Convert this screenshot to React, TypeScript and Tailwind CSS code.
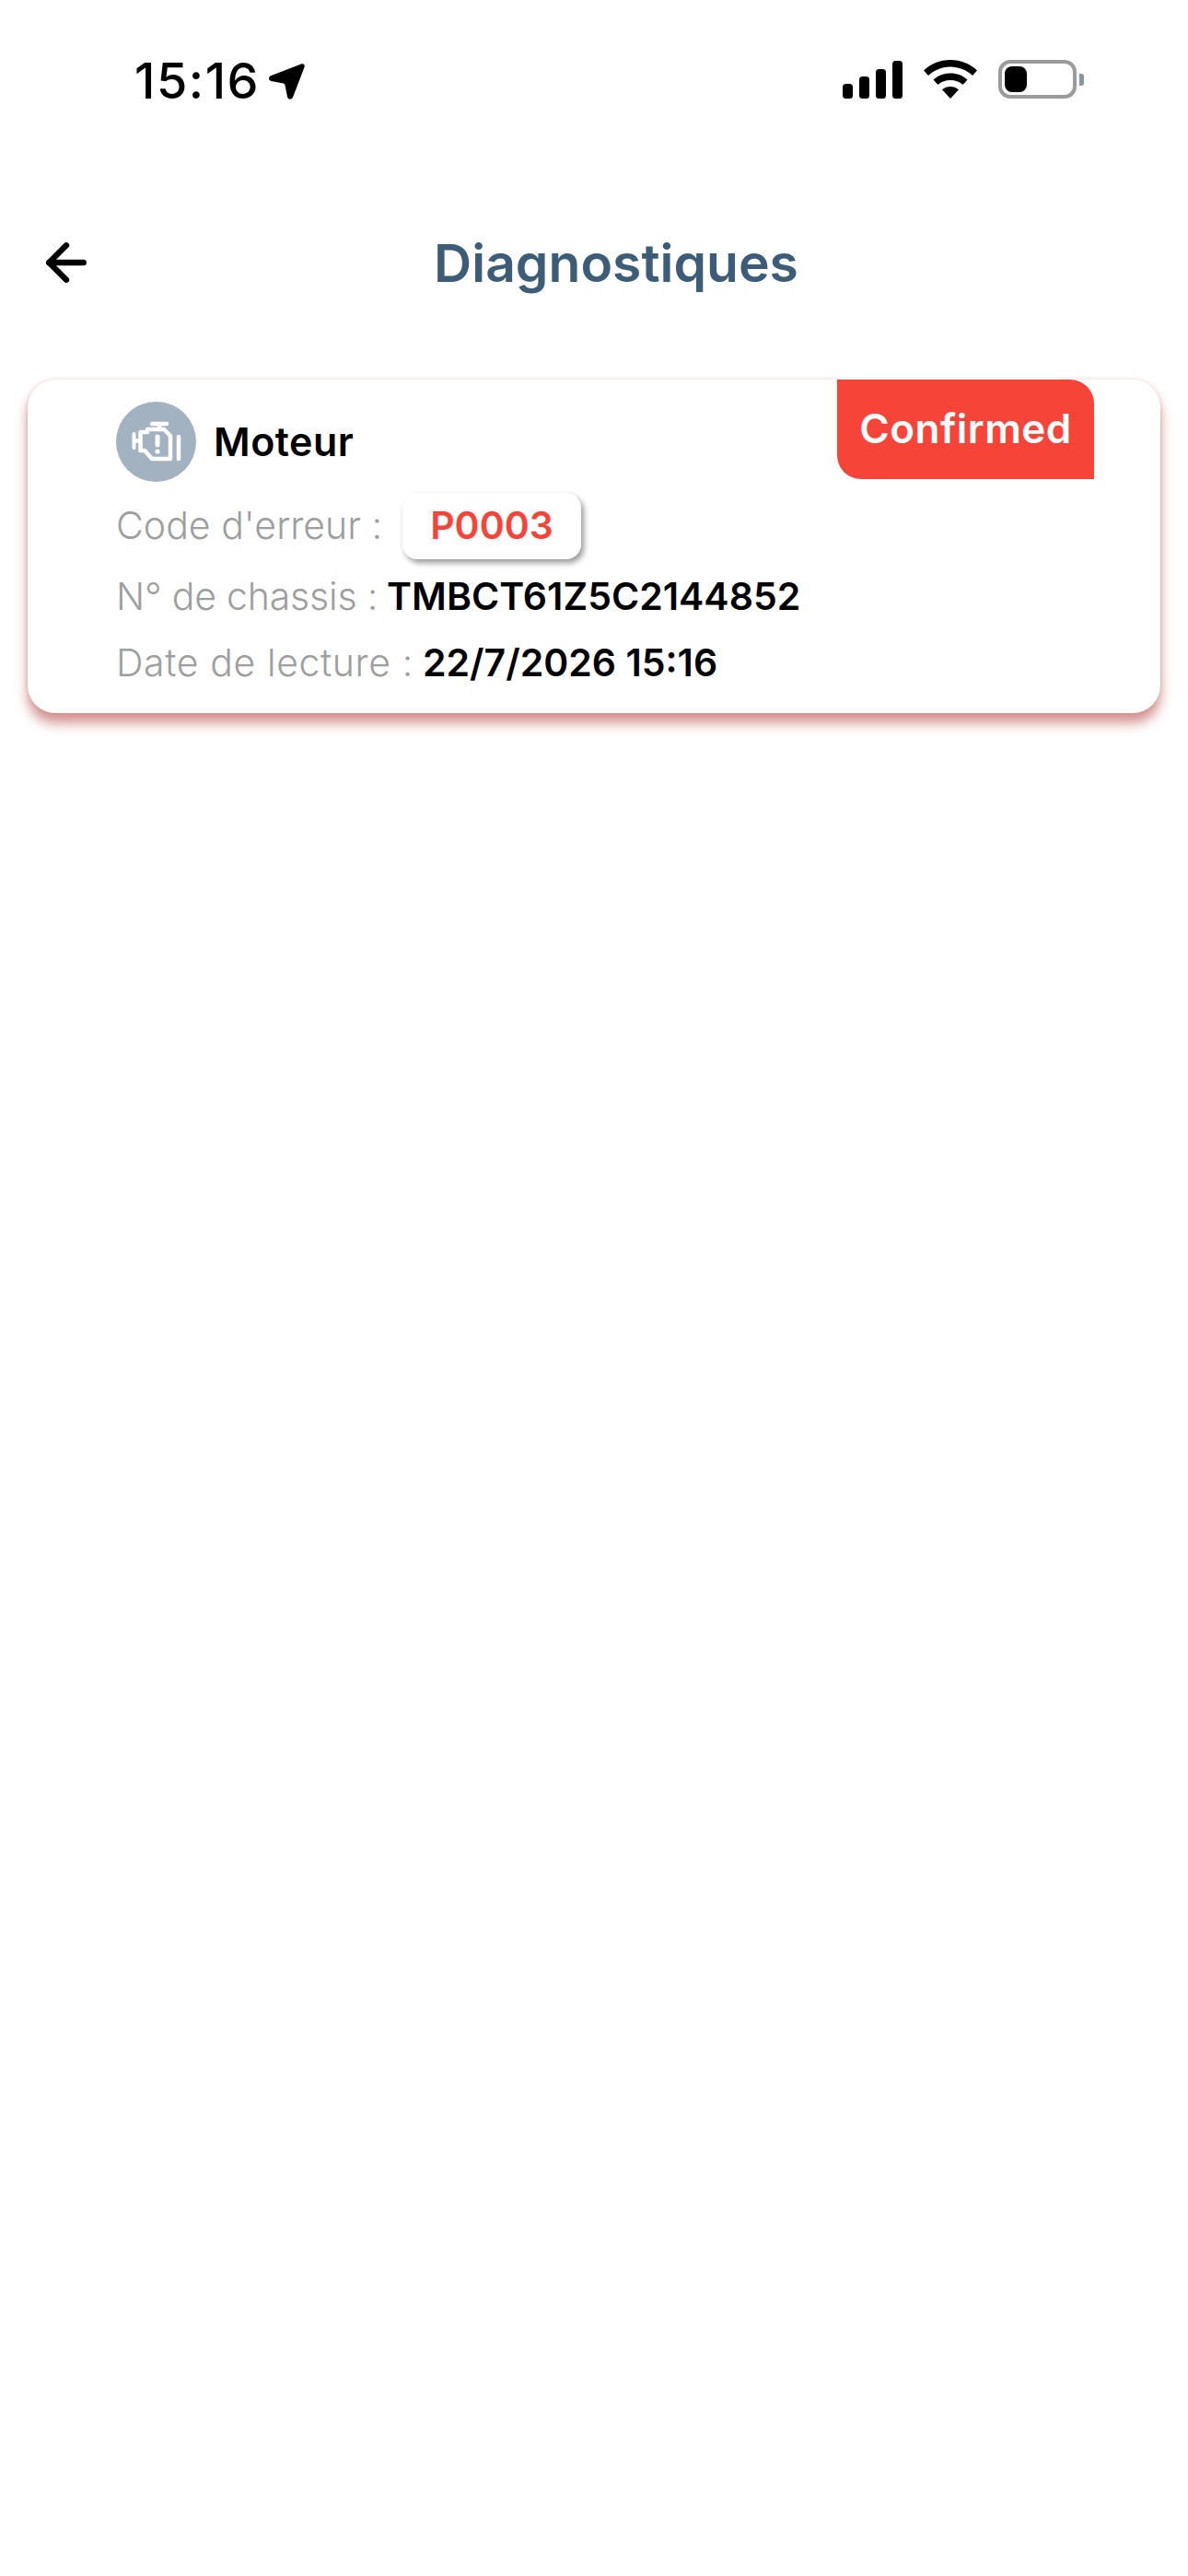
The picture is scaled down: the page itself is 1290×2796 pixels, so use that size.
import { ArrowLeft } from "lucide-react";

function SignalIcon() {
  return (
    <svg width="65" height="41" viewBox="0 0 65 41" fill="#000">
      <rect x="0" y="25" width="11" height="16" rx="3.5" />
      <rect x="18" y="17" width="11" height="24" rx="3.5" />
      <rect x="36" y="9" width="11" height="32" rx="3.5" />
      <rect x="54" y="0" width="11" height="41" rx="3.5" />
    </svg>
  );
}

function WifiIcon() {
  return (
    <svg width="58" height="42" viewBox="0 0 58 42" fill="#000">
      <path d="M29 0C18 0 8 4 0 11.500L5 17C11.500 11 20 7.500 29 7.500S46.500 11 53 17L58 11.500C50 4 40 0 29 0Z" />
      <path d="M29 14.500C22 14.500 15.500 17 10.500 21.500L15.500 27C19 23.800 24 22 29 22S39 23.800 42.500 27L47.500 21.500C42.500 17 36 14.500 29 14.500Z" />
      <path d="M29 29C25.500 29 22.500 30.200 20 32.300L29 42L38 32.300C35.500 30.200 32.500 29 29 29Z" />
    </svg>
  );
}

function BatteryIcon() {
  return (
    <div className="flex items-center gap-[3px]">
      <div className="flex h-[42px] w-[85px] items-center rounded-[13px] border-[4px] border-[#9b9b9b] pl-[3px]">
        <div className="h-[28px] w-[24px] rounded-[8px] bg-black" />
      </div>
      <div className="h-[13px] w-[5px] rounded-r-[3px] bg-[#8a949e]" />
    </div>
  );
}

function EngineIcon() {
  return (
    <svg width="54" height="46" viewBox="0 0 54 46" fill="none" stroke="#fff" strokeWidth="4.500" strokeLinecap="round" strokeLinejoin="round">
      <path d="M2.500 14V29" strokeWidth="4" />
      <path d="M3 21.500H9" />
      <path d="M22 3H38" />
      <path d="M30 3V9" />
      <path d="M9.500 12H17V9H35L42 16V41H22L14 32H9.500Z" />
      <path d="M51 17V41" strokeWidth="4.500" />
      <path d="M28 17V26" strokeWidth="5" />
      <circle cx="28" cy="33" r="2.600" fill="#fff" stroke="none" />
    </svg>
  );
}

export default function App() {
  return (
    <div className="min-h-[2796px] w-[1290px] bg-white font-['Inter',sans-serif]">
      {/* status bar */}
      <div className="flex h-[176px] items-start justify-between pl-[146px] pr-[113px] pt-[60px]">
        <div className="flex items-center gap-[9px] text-[54px] font-medium leading-[56px] tracking-[1.5px] text-black">
          <span>15:16</span>
          <svg width="41" height="41" viewBox="0 0 41 41" fill="#000">
            <path d="M36 1.500C38.500.5 40.500 2.500 39.500 5L27 37.500C25.800 40.500 21.500 40.200 21 37L18.500 24.500C18.300 23.500 17.500 22.700 16.500 22.500L3.500 20C.5 19.400 .2 15.500 3 14.300Z" />
          </svg>
        </div>
        <div className="flex items-center gap-[23px] pt-[5px]">
          <SignalIcon />
          <WifiIcon />
          <BatteryIcon />
        </div>
      </div>

      {/* header */}
      <div className="relative flex h-[236px] items-start justify-center px-[49px]">
        <ArrowLeft className="absolute left-[40px] top-[77px] h-[64px] w-[64px] text-black" strokeWidth={2.400} />
        <h1 className="ml-[48px] pt-[78px] text-[57px] font-semibold leading-[64px] text-[#3d5c78]">Diagnostiques</h1>
      </div>

      {/* card */}
      <div className="px-[30px]">
        <div className="relative h-[362px] rounded-[30px] bg-white pl-[96px] pt-[24px] shadow-[0_11px_13px_rgba(175,60,55,0.55),0_0_4px_rgba(175,60,55,0.2)]">
          <div className="absolute right-[72px] top-0 flex h-[108px] w-[279px] items-center justify-center rounded-bl-[26px] rounded-tr-[26px] bg-[#f74438] pb-[2px] text-[44px] font-semibold tracking-[0.5px] text-white">
            Confirmed
          </div>
          <div className="flex items-center gap-[19px]">
            <div className="flex h-[87px] w-[87px] items-center justify-center rounded-full bg-[#a2b2c0]">
              <EngineIcon />
            </div>
            <span className="text-[43px] font-semibold tracking-[0.5px] text-black">Moteur</span>
          </div>
          <div className="mt-[12px] flex items-center text-[41px] font-light text-[#9e9e9e]">
            <span className="w-[311px]">Code d'erreur :</span>
            <span className="flex h-[72px] w-[194px] items-center justify-center rounded-[16px] bg-white text-[41px] font-semibold text-[#f74438] shadow-[3px_4px_6px_rgba(0,0,0,0.4)]">
              P0003
            </span>
          </div>
          <div className="mt-[15px] flex items-center gap-[10px] text-[41px] font-light leading-[50px] text-[#9e9e9e]">
            <span className="tracking-[-0.2px]">N° de chassis :</span>
            <span className="font-semibold text-black">TMBCT61Z5C2144852</span>
          </div>
          <div className="mt-[22px] flex items-center gap-[10px] text-[41px] font-light leading-[50px] text-[#9e9e9e]">
            <span className="tracking-[0.6px]">Date de lecture :</span>
            <span className="font-semibold text-black">22/7/2026 15:16</span>
          </div>
        </div>
      </div>
    </div>
  );
}
